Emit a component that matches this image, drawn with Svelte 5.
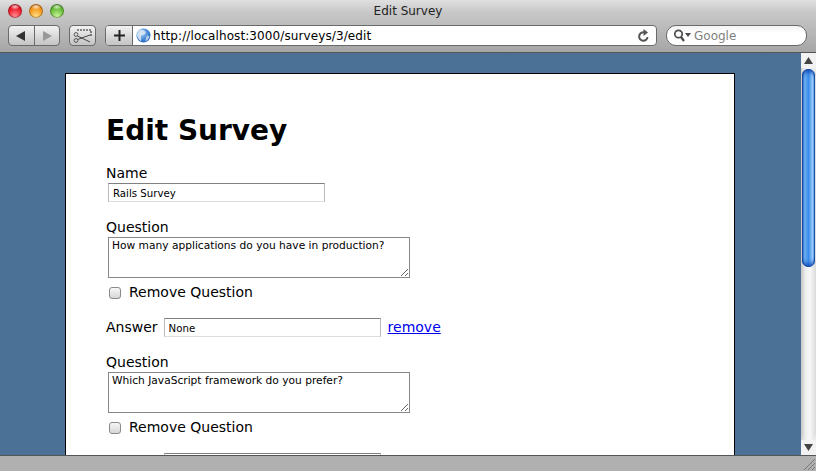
<script>
  const questions = [
    { text: "How many applications do you have in production?", answer: "None" },
    { text: "Which JavaScript framework do you prefer?", answer: "" },
  ];
</script>

<div class="window">
  <header class="chrome">
    <div class="titlebar">
      <div class="lights">
        <span class="light red"></span>
        <span class="light orange"></span>
        <span class="light green"></span>
      </div>
      <div class="title">Edit Survey</div>
    </div>
    <div class="toolbar">
      <div class="btn nav">
        <span class="seg">
          <svg width="14" height="12" viewBox="0 0 14 12"><path d="M2 6 11 1V11Z" fill="#333" /></svg>
        </span>
        <span class="seg">
          <svg width="14" height="12" viewBox="0 0 14 12"><path d="M12 6 3 1V11Z" fill="#999" /></svg>
        </span>
      </div>
      <div class="btn snip">
        <svg width="21" height="16" viewBox="0 0 21 16">
          <path d="M5 2H19V8.5" fill="none" stroke="#222" stroke-width="1.1" stroke-dasharray="2 1" />
          <path d="M5.5 8 18 14M5.5 11.5 18 7" fill="none" stroke="#444" stroke-width="1" />
          <circle cx="4" cy="6.5" r="1.9" fill="none" stroke="#555" />
          <circle cx="4" cy="12.5" r="1.9" fill="none" stroke="#555" />
        </svg>
      </div>
      <div class="address">
        <span class="plus">
          <svg width="13" height="13" viewBox="0 0 13 13"><path d="M6.5 1V12M1 6.5H12" stroke="#222" stroke-width="2" /></svg>
        </span>
        <svg class="globe" width="15" height="15" viewBox="0 0 15 15">
          <defs>
            <radialGradient id="g" cx="0.4" cy="0.35" r="0.8">
              <stop offset="0" stop-color="#a8d0f4" />
              <stop offset="0.6" stop-color="#3a7fd0" />
              <stop offset="1" stop-color="#1f55a8" />
            </radialGradient>
          </defs>
          <circle cx="7.5" cy="7.5" r="7" fill="url(#g)" />
          <path d="M5 1.5C8 2 10 3 9.5 5 9 7 6 6.5 5 8 4.5 9 6 11 5 13 3 12 1 9 1 7 1 4 3 2 5 1.5Z" fill="#dfeaf6" opacity="0.85" />
          <path d="M11 7.5 13.5 8C13 10.5 11.5 12.5 9.5 13.5 9.5 11 10 9 11 7.5Z" fill="#cfe0f2" opacity="0.8" />
        </svg>
        <span class="url">http://localhost:3000/surveys/3/edit</span>
        <svg class="reload" width="13" height="14" viewBox="0 0 13 14">
          <path d="M10.5 8A4.2 4.2 0 1 1 7 3.4" fill="none" stroke="#555" stroke-width="2" />
          <path d="M6.5 0V7L11 3.5Z" fill="#555" />
        </svg>
      </div>
      <div class="search">
        <svg width="18" height="13" viewBox="0 0 18 13">
          <circle cx="5.5" cy="5" r="3.7" fill="none" stroke="#4a4a4a" stroke-width="1.7" />
          <path d="M8 8 11 12" stroke="#4a4a4a" stroke-width="2.2" />
          <path d="M12 4H18L15 8Z" fill="#4a4a4a" />
        </svg>
        <span class="placeholder">Google</span>
      </div>
    </div>
  </header>

  <div class="viewport">
    <main class="page">
      <form class="card">
        <h1>Edit Survey</h1>

        <div class="field">
          <label for="name">Name</label>
          <input id="name" class="text" type="text" value="Rails Survey" />
        </div>

        {#each questions as q, i}
          <div class="field question">
            <label for={`q${i}`}>Question</label>
            <textarea id={`q${i}`} value={q.text}></textarea>
            <div class="remove-q">
              <input id={`r${i}`} type="checkbox" />
              <label for={`r${i}`}>Remove Question</label>
            </div>
          </div>
          <div class="answer">
            <label for={`a${i}`}>Answer</label>
            <input id={`a${i}`} class="text" type="text" value={q.answer} />
            <a href="#remove" class="remove">remove</a>
          </div>
        {/each}
      </form>
    </main>

    <aside class="scrollbar">
      <div class="arrow">
        <svg width="9" height="7" viewBox="0 0 9 7"><path d="M4.5 0 9 7H0Z" fill="#444" /></svg>
      </div>
      <div class="track">
        <div class="thumb"></div>
      </div>
      <div class="arrow">
        <svg width="9" height="7" viewBox="0 0 9 7"><path d="M4.5 7 9 0H0Z" fill="#444" /></svg>
      </div>
    </aside>
  </div>

  <footer class="status">
    <svg class="grip" width="11" height="11" viewBox="0 0 11 11">
      <path d="M11 0 0 11M11 4 4 11M11 8 8 11" stroke="#777" stroke-width="1" />
    </svg>
  </footer>
</div>

<style>
  :global(body) {
    margin: 0;
    overflow: hidden;
  }

  .window {
    display: flex;
    flex-direction: column;
    width: 816px;
    height: 471px;
    overflow: hidden;
    font-family: "DejaVu Sans", Verdana, sans-serif;
    background: #4b7197;
  }

  .chrome {
    flex: none;
    height: 52px;
    background: linear-gradient(#e0e0e0 0, #c8c8c8 12px, #a6a6a6 100%);
    border-bottom: 1px solid #555;
  }

  .titlebar {
    position: relative;
    height: 24px;
  }

  .lights {
    position: absolute;
    left: 8px;
    top: 4px;
    display: flex;
    gap: 7px;
  }

  .light {
    width: 14px;
    height: 14px;
    border-radius: 50%;
    box-shadow: inset 0 0 0 1px rgba(0, 0, 0, 0.3);
  }

  .red {
    background:
      radial-gradient(ellipse 5px 3px at 50% 20%, rgba(255, 255, 255, 0.75), transparent),
      radial-gradient(circle at 50% 85%, #ff8a90, #ee1c2c 55%, #b00814);
  }

  .orange {
    background:
      radial-gradient(ellipse 5px 3px at 50% 20%, rgba(255, 255, 255, 0.75), transparent),
      radial-gradient(circle at 50% 85%, #ffdc80, #f5981c 55%, #b85e08);
  }

  .green {
    background:
      radial-gradient(ellipse 5px 3px at 50% 20%, rgba(255, 255, 255, 0.75), transparent),
      radial-gradient(circle at 50% 85%, #c8f49c, #68bc38 55%, #3a8a1c);
  }

  .title {
    padding-top: 4px;
    text-align: center;
    font-size: 12px;
    line-height: 15px;
    color: #222;
  }

  .toolbar {
    display: flex;
    align-items: flex-start;
    padding: 0 9px 0 8px;
    height: 28px;
    margin-top: 1px;
  }

  .btn {
    display: flex;
    align-items: center;
    justify-content: center;
    height: 19px;
    border: 1px solid #6a6a6a;
    border-radius: 4px;
    background: linear-gradient(#f2f2f2, #c4c4c4);
  }

  .nav {
    width: 50px;
  }

  .seg {
    flex: 1;
    display: flex;
    justify-content: center;
    align-items: center;
    height: 100%;
  }

  .seg + .seg {
    border-left: 1px solid #6a6a6a;
  }

  .snip {
    width: 25px;
    margin-left: 9px;
  }

  .address {
    display: flex;
    align-items: center;
    width: 550px;
    height: 19px;
    margin-left: 9px;
    border: 1px solid #6a6a6a;
    border-radius: 4px;
    background: #fff;
    overflow: hidden;
  }

  .plus {
    flex: none;
    display: flex;
    align-items: center;
    justify-content: center;
    width: 26px;
    height: 100%;
    border-right: 1px solid #6a6a6a;
    background: linear-gradient(#f2f2f2, #c4c4c4);
  }

  .globe {
    margin-left: 3px;
  }

  .url {
    flex: 1;
    margin-left: 2px;
    font-size: 12px;
    letter-spacing: 0.1px;
    color: #000;
    white-space: nowrap;
  }

  .reload {
    margin-right: 6px;
  }

  .search {
    display: flex;
    align-items: center;
    width: 133px;
    height: 19px;
    margin-left: 9px;
    padding-left: 6px;
    border: 1px solid #6a6a6a;
    border-radius: 10px;
    background: linear-gradient(#f4f4f4, #fff 40%);
  }

  .placeholder {
    margin-left: 3px;
    font-size: 12px;
    color: #7f7f7f;
  }

  .viewport {
    flex: 1;
    display: flex;
    min-height: 0;
  }

  .page {
    flex: 1;
    min-width: 0;
    overflow: hidden;
    padding-top: 20px;
  }

  .card {
    box-sizing: border-box;
    width: 670px;
    margin-left: 65px;
    padding: 40px;
    border: 1px solid #000;
    background: #fff;
    color: #000;
  }

  h1 {
    margin: 0 0 17px;
    font-size: 28px;
    line-height: 34px;
    font-weight: bold;
  }

  label {
    font-size: 14px;
    line-height: 17px;
  }

  .field {
    margin-bottom: 17px;
  }

  .field > label {
    display: block;
  }

  .text {
    box-sizing: border-box;
    display: block;
    width: 217px;
    height: 19px;
    margin: 1px 0 0 2px;
    padding: 2px 4px 0;
    border: 1px solid #bbb;
    border-top-color: #808080;
    border-bottom-color: #ddd;
    border-radius: 0;
    outline: none;
    font: 10.2px "DejaVu Sans", Verdana, sans-serif;
    color: #000;
    background: #fff;
  }

  textarea {
    box-sizing: border-box;
    display: block;
    width: 302px;
    height: 41px;
    margin: 1px 0 0 2px;
    padding: 1px 3px;
    border: 1px solid #888;
    border-radius: 0;
    outline: none;
    font: 10.65px "DejaVu Sans", Verdana, sans-serif;
    color: #000;
    background: #fff;
  }

  .remove-q {
    display: flex;
    align-items: center;
    margin-top: 6px;
  }

  .remove-q input {
    appearance: none;
    box-sizing: border-box;
    width: 12px;
    height: 12px;
    margin: 0 8px 0 3px;
    border: 1px solid #8a8a8a;
    border-radius: 3px;
    background: linear-gradient(#f6f6f6, #d6d6d6);
  }

  .answer {
    display: flex;
    align-items: center;
    margin-bottom: 17px;
  }

  .answer .text {
    margin: 0 7px 0 6px;
  }

  .remove {
    font-size: 14px;
    line-height: 17px;
    margin-bottom: 1px;
    color: #0000ee;
    text-decoration: underline;
  }

  .scrollbar {
    flex: none;
    display: flex;
    flex-direction: column;
    width: 15px;
    background: linear-gradient(90deg, #d0d0d0, #f8f8f8 40%, #e8e8e8);
  }

  .arrow {
    flex: none;
    display: flex;
    align-items: center;
    justify-content: center;
    height: 15px;
    background: #f2f2f2;
  }

  .track {
    flex: 1;
    padding-top: 1px;
    background: linear-gradient(90deg, #c4c4c4, #eeeeee 30%, #f8f8f8 60%, #dadada);
    border-radius: 7px;
  }

  .thumb {
    height: 198px;
    margin: 0 1px;
    border-radius: 7px;
    background: linear-gradient(90deg, #1658c0, #6fb0f0 22%, #3a8ceb 50%, #9ccdf8 82%, #2a70d0);
    box-shadow: inset 0 0 0 1px rgba(10, 60, 150, 0.6), inset 0 6px 4px -3px rgba(10, 60, 170, 0.8), inset 0 -6px 4px -3px rgba(10, 60, 170, 0.8);
  }

  .status {
    flex: none;
    display: flex;
    justify-content: flex-end;
    align-items: flex-end;
    height: 16px;
    padding: 0 1px 1px 0;
    box-sizing: border-box;
    border-top: 1px solid #555;
    background: #b0b0b0;
  }

  .grip {
    display: block;
  }
</style>
